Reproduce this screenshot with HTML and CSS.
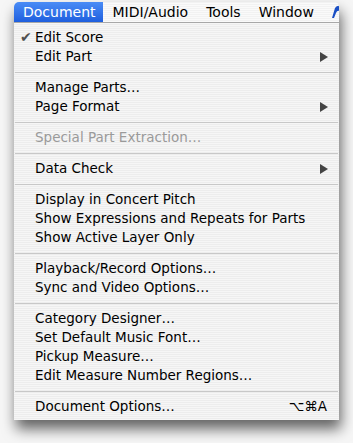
FILE: index.html
```html
<!DOCTYPE html>
<html lang="en">
<head>
  <meta charset="UTF-8" />
  <title>Document Menu</title>
  <link rel="stylesheet" href="styles.css">
</head>
<body>
  <div class="screen">
    <div class="panel">
      <div class="menubar">
        <span class="title active">Document</span>
        <span class="title">MIDI/Audio</span>
        <span class="title">Tools</span>
        <span class="title">Window</span>
        <span class="help-icon">
          <svg width="10" height="14" viewBox="0 0 10 14"><path d="M1 13 L4 3 Q6 0 10 1 L9 6 Q6 5 5 8 L3 13 Z" fill="#1a4fc4"/></svg>
        </span>
      </div>
      <ul class="menu">
        <li class="item"><span class="check">&#10004;</span>Edit Score</li>
        <li class="item sub">Edit Part</li>
        <li class="sep"></li>
        <li class="item">Manage Parts…</li>
        <li class="item sub">Page Format</li>
        <li class="sep"></li>
        <li class="item off">Special Part Extraction…</li>
        <li class="sep"></li>
        <li class="item sub">Data Check</li>
        <li class="sep"></li>
        <li class="item">Display in Concert Pitch</li>
        <li class="item">Show Expressions and Repeats for Parts</li>
        <li class="item">Show Active Layer Only</li>
        <li class="sep"></li>
        <li class="item">Playback/Record Options…</li>
        <li class="item">Sync and Video Options…</li>
        <li class="sep"></li>
        <li class="item">Category Designer…</li>
        <li class="item">Set Default Music Font…</li>
        <li class="item">Pickup Measure…</li>
        <li class="item">Edit Measure Number Regions…</li>
        <li class="sep"></li>
        <li class="item">Document Options…<span class="key">⌥⌘A</span></li>
      </ul>
    </div>
  </div>
</body>
</html>
```

FILE: styles.css
```css
body {
  margin: 0;
  background: #f6f6f6;
  font-family: "DejaVu Sans", sans-serif;
  font-size: 13.5px;
  color: #000;
}
.screen {
  width: 353px;
  height: 443px;
  padding: 2px 0 0 14px;
  box-sizing: border-box;
  overflow: hidden;
}
.panel {
  width: 325px;
  border-radius: 5px 5px 0 0;
  background: repeating-linear-gradient(#ededed 0, #ededed 1px, #f6f6f6 1px, #f6f6f6 2px);
  box-shadow: 2px 9px 14px rgba(0, 0, 0, 0.6);
  overflow: hidden;
}
.menubar {
  display: flex;
  align-items: center;
  height: 20px;
  border-bottom: 1px solid #a8a8a8;
  background: repeating-linear-gradient(#f2f2f2 0, #f2f2f2 1px, #fafafa 1px, #fafafa 2px);
  font-size: 14px;
  white-space: nowrap;
}
.title {
  height: 20px;
  line-height: 20px;
  padding: 0 9px;
}
.title.active {
  padding-right: 7px;
  margin-right: 1px;
  color: #fff;
  background: linear-gradient(#4a8cf6, #1f5fde);
}
.help-icon {
  margin-left: 8px;
  padding-top: 3px;
}
.menu {
  list-style: none;
  margin: 0;
  padding: 5px 0 4px;
}
.item {
  position: relative;
  height: 19px;
  line-height: 19px;
  padding: 0 12px 0 21px;
  white-space: nowrap;
}
.item.off {
  color: #9a9a9a;
}
.check {
  position: absolute;
  left: 6px;
  color: #505050;
  font-size: 14px;
}
.sub::after {
  content: "";
  position: absolute;
  right: 11px;
  top: 5px;
  border-left: 8px solid #444;
  border-top: 5px solid transparent;
  border-bottom: 5px solid transparent;
}
.key {
  position: absolute;
  right: 12px;
}
.sep {
  height: 12px;
  display: flex;
  align-items: center;
}
.sep::before {
  content: "";
  flex: 1;
  margin: 0 1px;
  border-top: 1px solid #c8c8c8;
}
```
